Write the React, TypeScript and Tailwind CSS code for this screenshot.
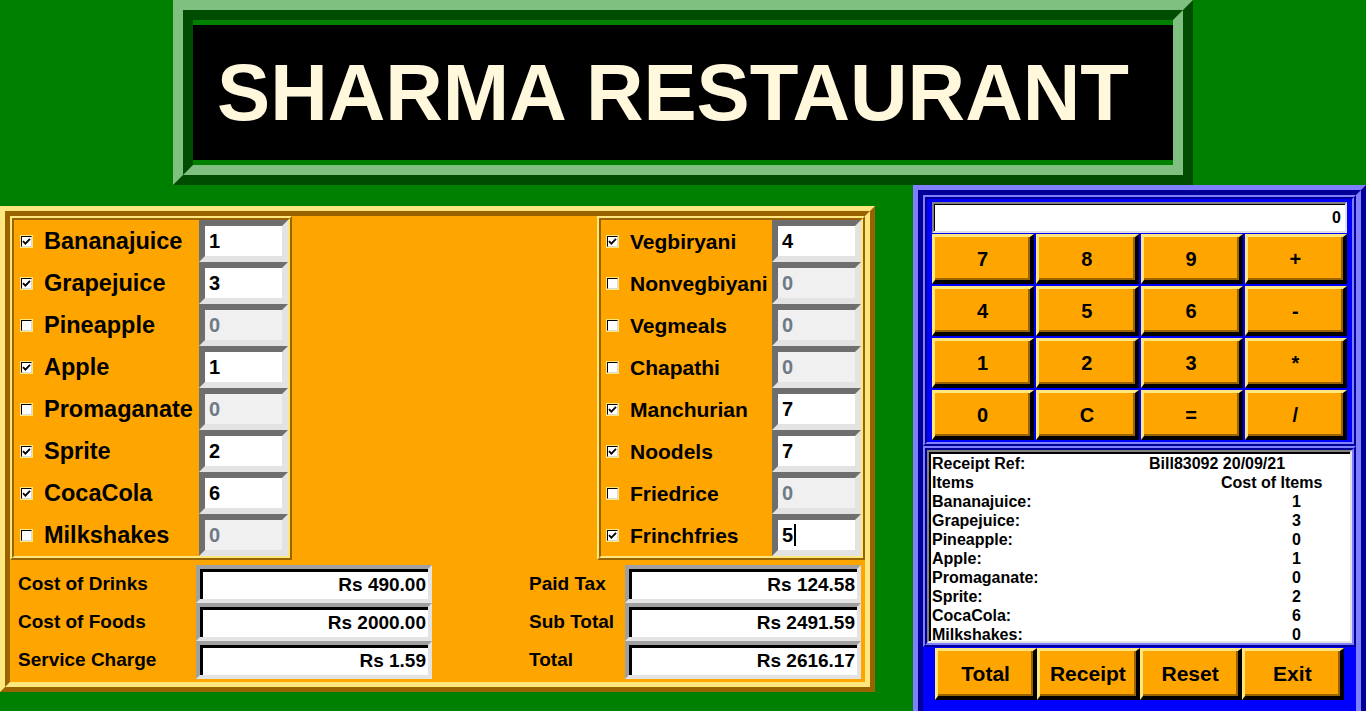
import React from "react";

type Item = { name: string; on: boolean; qty: string; cursor?: boolean };

const drinks: Item[] = [
  { name: "Bananajuice", on: true, qty: "1" },
  { name: "Grapejuice", on: true, qty: "3" },
  { name: "Pineapple", on: false, qty: "0" },
  { name: "Apple", on: true, qty: "1" },
  { name: "Promaganate", on: false, qty: "0" },
  { name: "Sprite", on: true, qty: "2" },
  { name: "CocaCola", on: true, qty: "6" },
  { name: "Milkshakes", on: false, qty: "0" },
];

const foods: Item[] = [
  { name: "Vegbiryani", on: true, qty: "4" },
  { name: "Nonvegbiyani", on: false, qty: "0" },
  { name: "Vegmeals", on: false, qty: "0" },
  { name: "Chapathi", on: false, qty: "0" },
  { name: "Manchurian", on: true, qty: "7" },
  { name: "Noodels", on: true, qty: "7" },
  { name: "Friedrice", on: false, qty: "0" },
  { name: "Frinchfries", on: true, qty: "5", cursor: true },
];

const keys = ["7", "8", "9", "+", "4", "5", "6", "-", "1", "2", "3", "*", "0", "C", "=", "/"];

const Check = ({ on }: { on: boolean }) => (
  <div className="w-[13px] h-[13px] shrink-0 border border-[#ffe77f]">
    <div className="w-full h-full border border-t-black border-l-black border-b-[#d9d9d9] border-r-[#d9d9d9] bg-white flex items-center justify-center">
      {on && (
        <svg width="9" height="9" viewBox="0 0 9 9">
          <path d="M1 4.2 L3.4 6.6 L8 1.8" stroke="black" strokeWidth="1.8" fill="none" />
        </svg>
      )}
    </div>
  </div>
);

const QtyBox = ({ item }: { item: Item }) => (
  <div
    className={`ml-auto w-[89px] h-[42px] shrink-0 border-[6px] border-t-[#6e6e6e] border-l-[#6e6e6e] border-b-[#e3e3e3] border-r-[#e3e3e3] flex items-center pl-[4px] text-[20px] font-bold ${
      item.on ? "bg-white text-black" : "bg-[#f0f0f0] text-[#6f7a86]"
    }`}
  >
    {item.qty}
    {item.cursor && <span className="inline-block w-[2px] h-[22px] bg-black ml-[1px]" />}
  </div>
);

const ItemFrame = ({ items, food }: { items: Item[]; food?: boolean }) => (
  <div
    className={`${food ? "w-[268px]" : "w-[282px]"} h-[344px] border-2 border-t-[#ffe77f] border-l-[#ffe77f] border-b-[#996300] border-r-[#996300]`}
  >
    <div className="h-full border-2 border-t-[#996300] border-l-[#996300] border-b-[#ffe77f] border-r-[#ffe77f] flex flex-col">
      {items.map((it) => (
        <div key={it.name} className="h-[42px] flex items-center">
          <div className={food ? "ml-[5px]" : "ml-[6px]"}>
            <Check on={it.on} />
          </div>
          <span className={`${food ? "ml-[11px] text-[21px]" : "ml-[11px] text-[23.5px] pt-[2px]"} font-bold leading-none`}>
            {it.name}
          </span>
          <QtyBox item={it} />
        </div>
      ))}
    </div>
  </div>
);

const CostBox = ({ value }: { value: string }) => (
  <div className="w-[236px] h-[38px] border-4 border-t-[#a0a0a0] border-l-[#a0a0a0] border-b-[#e3e3e3] border-r-[#e3e3e3]">
    <div className="h-full border-t-[3px] border-l-[3px] border-black bg-white flex items-center justify-end pr-[2px] text-[19px] font-bold">
      {value}
    </div>
  </div>
);

const costs = [
  ["Cost of Drinks", "Rs 490.00", "Paid Tax", "Rs 124.58"],
  ["Cost of Foods", "Rs 2000.00", "Sub Total", "Rs 2491.59"],
  ["Service Charge", "Rs 1.59", "Total", "Rs 2616.17"],
];

const receiptRows: [string, string][] = drinks.map((d) => [d.name + ":", d.qty]);

const OrangeButton = ({ label, size }: { label: string; size: string }) => (
  <div className="h-full border-t-[3px] border-l-[3px] border-b-[4px] border-r-[4px] border-t-[#ffe77f] border-l-[#ffe77f] border-b-black border-r-black bg-[#ffa500] shadow-[inset_-2px_-2px_0_0_#996300] flex items-center justify-center">
    <span className={`${size} font-bold leading-none`}>{label}</span>
  </div>
);

export default function App() {
  return (
    <div className="w-[1366px] h-[711px] overflow-hidden bg-[#008000] font-['Liberation_Sans',Arial,sans-serif] text-black">
      {/* title */}
      <div className="ml-[173px] w-[1020px] h-[185px] border-[10px] border-t-[#7fbf7f] border-l-[#7fbf7f] border-b-[#004c00] border-r-[#004c00]">
        <div className="h-full border-[10px] border-t-[#004c00] border-l-[#004c00] border-b-[#7fbf7f] border-r-[#7fbf7f] bg-[#008000] py-[5px]">
          <div className="h-full bg-black flex items-center pl-[24px]">
            <span className="text-[79.7px] font-bold leading-none text-[#fff8dc]">SHARMA RESTAURANT</span>
          </div>
        </div>
      </div>

      <div className="flex items-start">
        {/* order panel */}
        <div className="mt-[21px] w-[875px] h-[486px] shrink-0 border-[5px] border-t-[#ffe77f] border-l-[#ffe77f] border-b-[#996300] border-r-[#996300]">
          <div className="h-full border-[5px] border-t-[#996300] border-l-[#996300] border-b-[#ffe77f] border-r-[#ffe77f] bg-[#ffa500] flex flex-col">
            <div className="flex justify-between">
              <ItemFrame items={drinks} />
              <ItemFrame items={foods} food />
            </div>
            <div className="pt-[5px] flex flex-col">
              {costs.map(([l1, v1, l2, v2]) => (
                <div key={l1} className="h-[38px] flex items-center">
                  <span className="w-[186px] pl-[8px] text-[19px] font-bold">{l1}</span>
                  <CostBox value={v1} />
                  <span className="ml-[97px] w-[96px] text-[19px] font-bold">{l2}</span>
                  <CostBox value={v2} />
                </div>
              ))}
            </div>
          </div>
        </div>

        {/* calculator + receipt */}
        <div className="ml-[38px] w-[453px] h-[540px] shrink-0 border-[5px] border-t-[#7f7fff] border-l-[#7f7fff] border-b-[#000099] border-r-[#000099]">
          <div className="h-full border-[5px] border-t-[#000099] border-l-[#000099] border-b-[#7f7fff] border-r-[#7f7fff] bg-[#0000ff] flex flex-col">
            <div className="border-2 border-t-[#7f7fff] border-l-[#7f7fff] border-b-[#000099] border-r-[#000099]">
              <div className="border-2 border-t-[#000099] border-l-[#000099] border-b-[#7f7fff] border-r-[#7f7fff] px-[4px] pt-[3px] pb-[1px]">
                <div className="mx-[1px] h-[31px] border-2 border-t-[#808080] border-l-[#808080] border-b-[#e3e3e3] border-r-[#e3e3e3]">
                  <div className="h-full border-t border-l border-black bg-white flex items-center justify-end pr-[4px] text-[16px] font-bold">
                    0
                  </div>
                </div>
                <div className="grid grid-cols-4">
                  {keys.map((k) => (
                    <div key={k} className="h-[52px] p-[1px]">
                      <OrangeButton label={k} size="text-[20px]" />
                    </div>
                  ))}
                </div>
              </div>
            </div>

            <div className="border-2 border-t-[#7f7fff] border-l-[#7f7fff] border-b-[#000099] border-r-[#000099]">
              <div className="border-2 border-t-[#000099] border-l-[#000099] border-b-[#7f7fff] border-r-[#7f7fff]">
                <div className="h-[193px] border-t-2 border-l-2 border-b-2 border-r-2 border-t-[#808080] border-l-[#808080] border-b-[#e3e3e3] border-r-[#e3e3e3]">
                  <div className="h-full border-t-2 border-l-2 border-black bg-white pl-[1px] text-[16px] font-bold leading-[19px]">
                    <div className="flex">
                      <span className="w-[217px]">Receipt Ref:</span>
                      <span>Bill83092 20/09/21</span>
                    </div>
                    <div className="flex">
                      <span className="w-[289px]">Items</span>
                      <span>Cost of Items</span>
                    </div>
                    {receiptRows.map(([n, q]) => (
                      <div key={n} className="flex">
                        <span className="w-[360px]">{n}</span>
                        <span>{q}</span>
                      </div>
                    ))}
                  </div>
                </div>
              </div>
            </div>

            <div className="flex px-[12px] pt-[1px]">
              {["Total", "Receipt", "Reset", "Exit"].map((b) => (
                <div key={b} className="flex-1 h-[52px]">
                  <OrangeButton label={b} size="text-[21px]" />
                </div>
              ))}
            </div>
          </div>
        </div>
      </div>
    </div>
  );
}
